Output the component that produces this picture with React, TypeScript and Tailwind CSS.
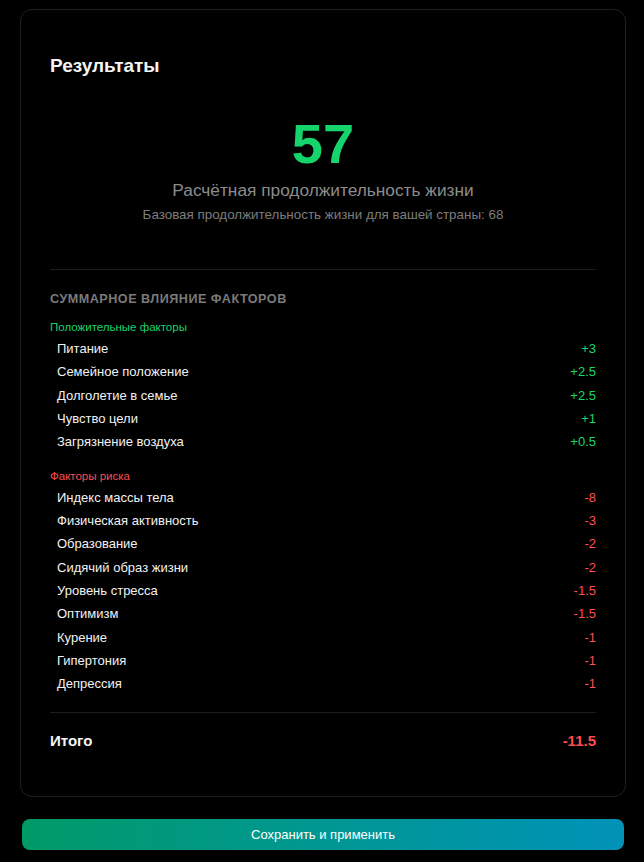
import React from 'react'

type Factor = { name: string; value: string }

const positive: Factor[] = [
  { name: 'Питание', value: '+3' },
  { name: 'Семейное положение', value: '+2.5' },
  { name: 'Долголетие в семье', value: '+2.5' },
  { name: 'Чувство цели', value: '+1' },
  { name: 'Загрязнение воздуха', value: '+0.5' },
]

const risks: Factor[] = [
  { name: 'Индекс массы тела', value: '-8' },
  { name: 'Физическая активность', value: '-3' },
  { name: 'Образование', value: '-2' },
  { name: 'Сидячий образ жизни', value: '-2' },
  { name: 'Уровень стресса', value: '-1.5' },
  { name: 'Оптимизм', value: '-1.5' },
  { name: 'Курение', value: '-1' },
  { name: 'Гипертония', value: '-1' },
  { name: 'Депрессия', value: '-1' },
]

function FactorRow({ item, tone }: { item: Factor; tone: 'good' | 'bad' }) {
  return (
    <div className="flex h-[23.35px] items-center justify-between pl-[7px] text-[13px]">
      <span className="text-[#f2f2f2]">{item.name}</span>
      <span className={tone === 'good' ? 'text-[#1ad46e]' : 'text-[#ff4d4f]'}>{item.value}</span>
    </div>
  )
}

export default function App() {
  return (
    <div className="min-h-screen bg-black pt-[9px] font-['Liberation_Sans',Arial,sans-serif]">
      <div className="ml-[20px] w-[606px] rounded-xl border border-[#1f1f1f] bg-black px-[29px] pt-[44px] pb-[44px]">
        <h2 className="text-[19px] font-bold leading-[24px] text-[#f4f4f4]">Результаты</h2>

        {/* main number */}
        <div className="mt-[38px] flex flex-col items-center border-b border-[#1c1c1c] pb-[44px]">
          <div className="text-[56px] font-bold leading-[56px] text-[#16d46c]">57</div>
          <div className="mt-[6px] text-[17.3px] leading-[24px] text-[#8c8c8c]">
            Расчётная продолжительность жизни
          </div>
          <div className="mt-[3px] text-[13.4px] leading-[20px] text-[#7d7d7d]">
            Базовая продолжительность жизни для вашей страны: 68
          </div>
        </div>

        <div className="mt-[19px] text-[12.6px] font-semibold uppercase leading-[20px] tracking-[0.04em] text-[#7a7a7a]">
          Суммарное влияние факторов
        </div>

        <div className="mt-[10px] text-[11.5px] leading-[16px] text-[#17d46b]">Положительные факторы</div>
        <div className="mt-[2px] flex flex-col">
          {positive.map((f) => (
            <FactorRow key={f.name} item={f} tone="good" />
          ))}
        </div>

        <div className="mt-[14px] text-[11.5px] leading-[16px] text-[#ff4d4f]">Факторы риска</div>
        <div className="mt-[2px] flex flex-col border-b border-[#1c1c1c] pb-[16px]">
          {risks.map((f) => (
            <FactorRow key={f.name} item={f} tone="bad" />
          ))}
        </div>

        <div className="mt-[17px] flex items-center justify-between text-[15px] font-bold leading-[22px]">
          <span className="text-[#f4f4f4]">Итого</span>
          <span className="text-[#ff4d4f]">-11.5</span>
        </div>
      </div>

      <button className="mt-[22px] ml-[22px] flex h-[31px] w-[602px] items-center justify-center rounded-lg bg-gradient-to-r from-[#009a68] to-[#0392b8] text-[13px] font-medium text-white">
        Сохранить и применить
      </button>
    </div>
  )
}
